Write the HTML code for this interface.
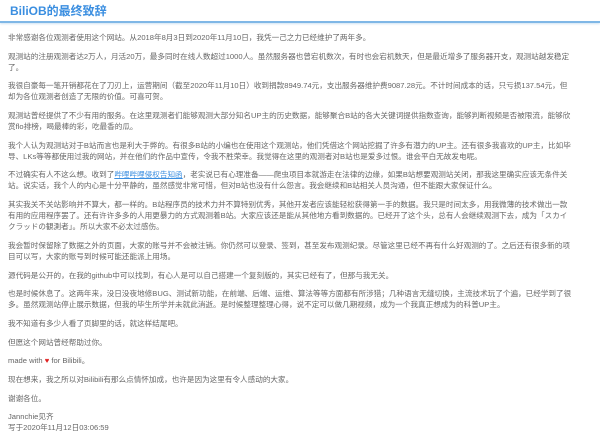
<!DOCTYPE html>
<html><head><meta charset="utf-8"><style>
html,body{margin:0;padding:0;background:#fff;width:600px;height:435px;overflow:hidden}
body{font-family:"Liberation Sans","Noto Sans CJK SC",sans-serif;color:#666}
.t{height:21px;border-bottom:2px solid #7fb7e6;box-shadow:0 1px 2px #cfe3f3;padding-left:10px}
.t h1{margin:0;font-size:12px;line-height:22px;color:#3a8ee0;font-weight:bold}
.c{padding:9px 10px 0 8px;font-size:7.6px;line-height:11px}
p{margin:0 0 7.7px 0}
a{color:#3a8ee0;text-decoration:underline}
.h{color:#e02020}
</style></head><body>
<div class="t"><h1>BiliOB的最终致辞</h1></div>
<div class="c">
<p>非常感谢各位观测者使用这个网站。从2018年8月3日到2020年11月10日，我凭一己之力已经维护了两年多。</p>
<p>观测站的注册观测者达2万人，月活20万，最多同时在线人数超过1000人。虽然服务器也曾宕机数次，有时也会宕机数天，但是最近增多了服务器开支，观测站越发稳定<br>了。</p>
<p>我很自豪每一笔开销都花在了刀刃上，运营期间（截至2020年11月10日）收到捐款8949.74元，支出服务器维护费9087.28元。不计时间成本的话，只亏损137.54元，但<br>却为各位观测者创造了无限的价值。可喜可贺。</p>
<p>观测站曾经提供了不少有用的服务。在这里观测者们能够观测大部分知名UP主的历史数据，能够聚合B站的各大关键词提供指数查询，能够判断视频是否被限流，能够欣<br>赏flo排榜，喝最棒的彩，吃最香的瓜。</p>
<p>我个人认为观测站对于B站而言也是利大于弊的。有很多B站的小编也在使用这个观测站，他们凭借这个网站挖掘了许多有潜力的UP主。还有很多我喜欢的UP主，比如毕<br>导、LKs等等都使用过我的网站，并在他们的作品中宣传，令我不胜荣幸。我觉得在这里的观测者对B站也是爱多过恨。谁会平白无故发电呢。</p>
<p>不过确实有人不这么想。收到了<a>哔哩哔哩侵权告知函</a>，老实说已有心理准备——爬虫项目本就游走在法律的边缘，如果B站想要观测站关闭，那我这里确实应该无条件关<br>站。说实话，我个人的内心是十分平静的，虽然感觉非常可惜，但对B站也没有什么怨言。我会继续和B站相关人员沟通，但不能跟大家保证什么。</p>
<p>其实我关不关站影响并不算大，都一样的。B站程序员的技术力并不算特别优秀，其他开发者应该能轻松获得第一手的数据。我只是时间太多，用我微薄的技术做出一款<br>有用的应用程序罢了。还有许许多多的人用更暴力的方式观测着B站。大家应该还是能从其他地方看到数据的。已经开了这个头，总有人会继续观测下去，成为「スカイ<br>クラッドの観測者」。所以大家不必太过感伤。</p>
<p>我会暂时保留除了数据之外的页面，大家的账号并不会被注销。你仍然可以登录、签到，甚至发布观测纪录。尽管这里已经不再有什么好观测的了。之后还有很多新的项<br>目可以写，大家的账号到时候可能还能派上用场。</p>
<p>源代码是公开的，在我的github中可以找到，有心人是可以自己搭建一个复刻版的，其实已经有了，但那与我无关。</p>
<p>也是时候休息了。这两年来，没日没夜地修BUG、测试新功能，在前端、后端、运维、算法等等方面都有所涉猎；几种语言无缝切换，主流技术玩了个遍，已经学到了很<br>多。虽然观测站停止展示数据，但我的毕生所学并未就此消逝。是时候整理整理心得，说不定可以做几期视频，成为一个我真正想成为的科普UP主。</p>
<p>我不知道有多少人看了页脚里的话，就这样结尾吧。</p>
<p>但愿这个网站曾经帮助过你。</p>
<p>made with <span class="h">♥</span> for Bilibili。</p>
<p>现在想来，我之所以对Bilibili有那么点情怀加成，也许是因为这里有令人感动的大家。</p>
<p>谢谢各位。</p>
<p style="margin:0">Jannchie见齐<br>写于2020年11月12日03:06:59</p>
</div>
</body></html>
